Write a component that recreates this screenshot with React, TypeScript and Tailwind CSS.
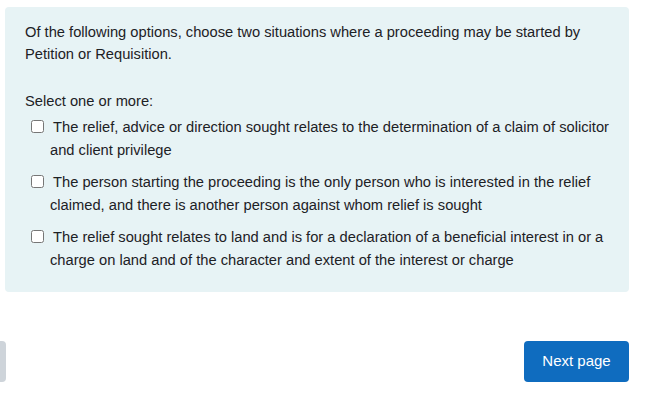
import React from "react";

const options = [
  "The relief, advice or direction sought relates to the determination of a claim of solicitor and client privilege",
  "The person starting the proceeding is the only person who is interested in the relief claimed, and there is another person against whom relief is sought",
  "The relief sought relates to land and is for a declaration of a beneficial interest in or a charge on land and of the character and extent of the interest or charge",
];

export default function App() {
  return (
    <div
      className="w-[649px] h-[402px] bg-white overflow-hidden pl-[5px] pr-[20px] pt-[7px] text-[#1d2125] text-[14.7px]"
      style={{ fontFamily: '"Liberation Sans", Arial, sans-serif' }}
    >
      <div className="bg-[#e7f3f5] rounded-[4px] pt-[14px] pb-[20px] px-[20px]">
        <p className="leading-[22px] mb-[25px]">
          Of the following options, choose two situations where a proceeding may be started by Petition or Requisition.
        </p>
        <div className="leading-[22px] mb-[4px]">Select one or more:</div>
        <div className="flex flex-col gap-[9px]">
          {options.map((o, i) => (
            <div key={i} className="pl-[25px] leading-[23px]">
              <input
                type="checkbox"
                className="ml-[-19px] mr-[9px] align-[-1px] w-[13px] h-[13px]"
              />
              {o}
            </div>
          ))}
        </div>
      </div>
      <div className="flex justify-between items-center mt-[49px] ml-[-5px]">
        <div className="w-[6px] h-[41px] bg-[#ced4da] rounded-r-[4px]" />
        <button className="w-[105px] h-[41px] bg-[#0f6cbf] text-white rounded-[4px] text-[15px]">
          Next page
        </button>
      </div>
    </div>
  );
}
